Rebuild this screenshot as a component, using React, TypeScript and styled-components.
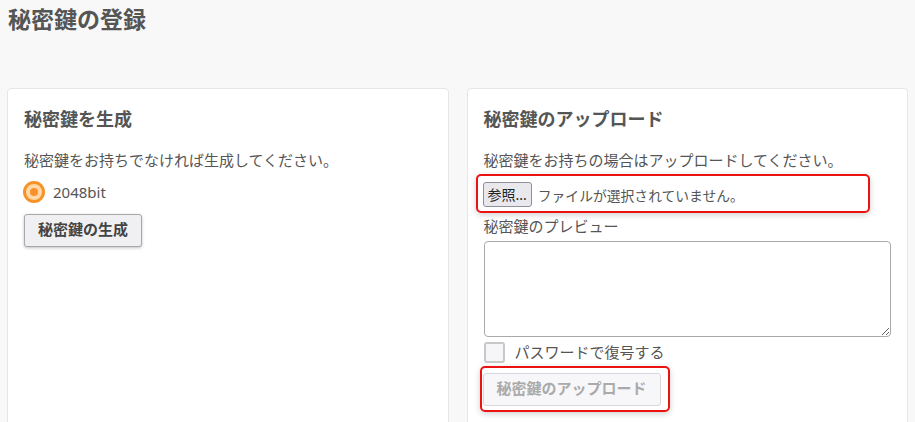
import React, { useState } from "react";
import styled, { createGlobalStyle } from "styled-components";

const GlobalStyle = createGlobalStyle`
  html, body {
    margin: 0;
    padding: 0;
    background: #f8f8f8;
  }
  body {
    font-family: "Noto Sans", "Noto Sans CJK JP", sans-serif;
    color: #555;
  }
`;

const Page = styled("div")`
  padding: 0 7px;
  height: 422px;
  overflow: hidden;
`;

const Title = styled("h1")`
  margin: 0;
  padding: 5px 0 0 1px;
  height: 88px;
  box-sizing: border-box;
  font-family: "Liberation Serif", "Noto Sans CJK JP", serif;
  font-size: 23px;
  font-weight: 700;
  line-height: 32px;
  color: #555;
`;

const Columns = styled("div")`
  display: grid;
  grid-template-columns: 1fr 1fr;
  gap: 18px;
`;

const Card = styled("section")`
  background: #fff;
  border: 1px solid #e6e6e6;
  border-radius: 4px;
  padding: 15px 16px 40px 16px;
  min-height: 360px;
`;

const CardTitle = styled("h2")`
  margin: 0 0 13px 0;
  font-family: "Liberation Serif", "Noto Sans CJK JP", serif;
  font-size: 18px;
  font-weight: 700;
  line-height: 32px;
  color: #555;
`;

const Text = styled("p")`
  margin: 0;
  font-size: 15px;
  line-height: 22px;
  color: #555;
`;

const RadioRow = styled("label")`
  display: flex;
  align-items: center;
  gap: 8px;
  margin-top: 8px;
  margin-left: -1px;
  font-size: 15px;
  line-height: 26px;
`;

const RadioMark = styled("span")`
  width: 16px;
  height: 16px;
  border-radius: 50%;
  border: 3px solid #f8912a;
  background: #ffd9a8;
  display: flex;
  align-items: center;
  justify-content: center;
  &::after {
    content: "";
    width: 8px;
    height: 8px;
    border-radius: 50%;
    background: #f8912a;
  }
`;

const Button = styled("button")<{ $disabled?: boolean }>`
  font-family: "Liberation Serif", "Noto Sans CJK JP", serif;
  font-size: 15px;
  font-weight: 700;
  line-height: 21px;
  padding: 5px 13px;
  border-radius: 3px;
  border: 1px solid ${p => (p.$disabled ? "#d8d8dc" : "#a8a8ac")};
  background: ${p => (p.$disabled ? "#f7f7f9" : "#f0f0f3")};
  color: ${p => (p.$disabled ? "#aaa" : "#444")};
  box-shadow: ${p => (p.$disabled ? "none" : "0 1px 3px rgba(0,0,0,0.25)")};
  cursor: ${p => (p.$disabled ? "default" : "pointer")};
`;

const ButtonRow = styled("div")`
  margin-top: 9px;
`;

// red callout frame around a control
const Highlight = styled("div")<{ $inline?: boolean }>`
  display: ${p => (p.$inline ? "inline-flex" : "flex")};
  align-items: center;
  border: 2px solid #ee1111;
  border-radius: 5px;
  box-shadow: 0 2px 6px rgba(0,0,0,0.18);
`;

const FileBox = styled(Highlight)`
  margin: 3px 21px 0 -8px;
  padding: 6px 5px 4px 5px;
  gap: 6px;
`;

const FileButton = styled("span")`
  font-size: 14px;
  line-height: 21px;
  padding: 1px 4px;
  border: 1px solid #8f8f9d;
  border-radius: 3px;
  background: #e9e9ed;
  color: #222;
`;

const FileText = styled("span")`
  font-size: 13.8px;
  color: #555;
`;

const Label = styled(Text)`
  margin-top: 2px;
`;

const Preview = styled("textarea")`
  display: block;
  box-sizing: border-box;
  width: 100%;
  height: 96px;
  margin-top: 4px;
  border: 1px solid #aaa;
  border-radius: 4px;
  resize: vertical;
`;

const CheckRow = styled("label")`
  display: flex;
  align-items: center;
  gap: 10px;
  margin-top: 4px;
  font-size: 15px;
  line-height: 22px;
`;

const CheckMark = styled("span")`
  width: 17px;
  height: 17px;
  border: 2px solid #c8c8c8;
  border-radius: 3px;
  background: #f6f6f8;
`;

const UploadBox = styled(Highlight)`
  margin: 3px 0 0 -4px;
  padding: 5px 7px 4px 1px;
`;

export default function App() {
    const [bits] = useState("2048bit");

    return (
        <>
            <GlobalStyle />
            <Page>
                <Title>秘密鍵の登録</Title>
                <Columns>
                    <Card>
                        <CardTitle>秘密鍵を生成</CardTitle>
                        <Text>秘密鍵をお持ちでなければ生成してください。</Text>
                        <RadioRow>
                            <RadioMark />
                            {bits}
                        </RadioRow>
                        <ButtonRow>
                            <Button>秘密鍵の生成</Button>
                        </ButtonRow>
                    </Card>
                    <Card>
                        <CardTitle>秘密鍵のアップロード</CardTitle>
                        <Text>秘密鍵をお持ちの場合はアップロードしてください。</Text>
                        <FileBox>
                            <FileButton>参照...</FileButton>
                            <FileText>ファイルが選択されていません。</FileText>
                        </FileBox>
                        <Label>秘密鍵のプレビュー</Label>
                        <Preview />
                        <CheckRow>
                            <CheckMark />
                            パスワードで復号する
                        </CheckRow>
                        <UploadBox $inline>
                            <Button $disabled>秘密鍵のアップロード</Button>
                        </UploadBox>
                    </Card>
                </Columns>
            </Page>
        </>
    );
}
